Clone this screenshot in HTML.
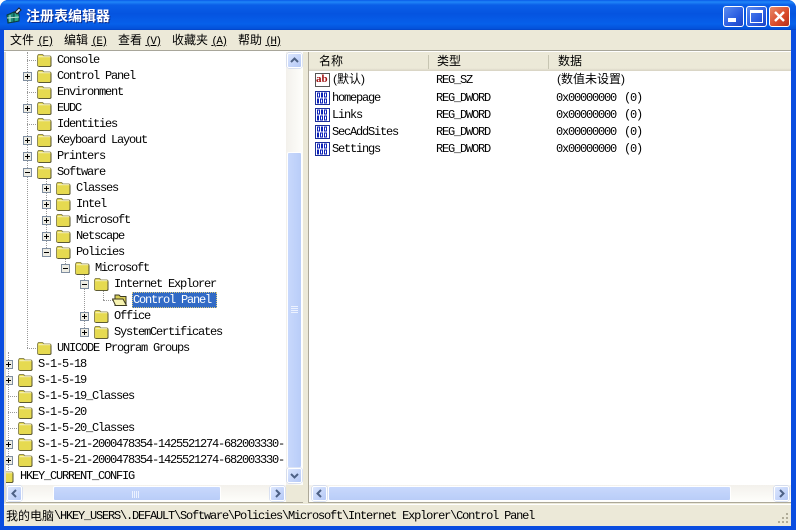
<!DOCTYPE html>
<html><head><meta charset="utf-8"><style>
*{box-sizing:border-box}
html,body{margin:0;padding:0;width:796px;height:530px;overflow:hidden;background:#fff}
#w{position:relative;width:796px;height:530px;overflow:hidden;background:#0a4de0;border-radius:8px 8px 0 0}
.a{position:absolute}
.t{position:absolute;font:12px/16px "Liberation Mono",monospace;letter-spacing:-1.2px;color:#000;white-space:pre}
.c{position:absolute;font:12px/14px "Liberation Sans","WenQuanYi Zen Hei","Noto Sans CJK SC",sans-serif;color:#000;white-space:pre}
.c u{font:11px "Liberation Mono",monospace;letter-spacing:-1.6px;text-decoration:underline}
svg.a{overflow:visible}
.h{border-top:1px dotted #999;height:0;position:absolute}
.v{border-left:1px dotted #999;width:0;position:absolute}
.btn{position:absolute;width:15px;height:15px;background:linear-gradient(135deg,#dbe6fe,#b4c8f6);border:1px solid #fff;border-radius:2px;box-shadow:0 0 0 .5px #b9c9ee}
</style></head><body>
<svg width="0" height="0" style="position:absolute"><defs>
<symbol id="f" viewBox="0 0 16 14"><path d="M1.5 3 L2.5 1.5 H6.5 L8 3 H14 L15 4 V12.5 L14 13.5 H2.5 L1.5 12.5 Z" fill="#e6da50" stroke="#8f8a58"/><path d="M2.5 3.7H14" stroke="#f8f4c0"/><path d="M15 4.5 V12.8 L14 13.6 H3" fill="none" stroke="#55532f"/></symbol>
<symbol id="o" viewBox="0 0 17 14"><path d="M3 12.5 V2 H7 L8.5 3.5 H14 V12.5 Z" fill="#d8ce58" stroke="#3c3a20"/><path d="M0.5 6 H11 L14.5 12.5 H3.5 Z" fill="#f7f3b0" stroke="#3c3a20"/></symbol>
<symbol id="p" viewBox="0 0 9 9"><rect x=".5" y=".5" width="8" height="8" fill="#eeede4" stroke="#7f8ea0"/><path d="M2 4.5H7M4.5 2V7" stroke="#000"/></symbol>
<symbol id="m" viewBox="0 0 9 9"><rect x=".5" y=".5" width="8" height="8" fill="#eeede4" stroke="#7f8ea0"/><path d="M2 4.5H7" stroke="#000"/></symbol>
<symbol id="b" viewBox="0 0 17 16"><path d="M1.5 1.5H15.5V14.5H1.5Z" fill="#fff" stroke="#1c2f9c"/><g fill="#0c22b8"><rect x="3" y="2.5" width="3" height="5"/><rect x="7" y="2.5" width="2" height="5"/><rect x="10" y="2.5" width="3" height="5"/><rect x="3" y="8.5" width="2" height="5"/><rect x="6" y="8.5" width="3" height="5"/><rect x="10" y="8.5" width="3" height="5"/></g><g fill="#fff"><rect x="4" y="3.5" width="1" height="3"/><rect x="11" y="3.5" width="1" height="3"/><rect x="7" y="9.5" width="1" height="3"/><rect x="11" y="9.5" width="1" height="3"/></g></symbol>
</defs></svg>
<div id="w">
<!-- title bar -->
<div class="a" style="left:0;top:0;width:796px;height:30px;background:linear-gradient(#0a5ae8 0,#1f86f8 2px,#0a5fe8 5px,#0554e0 14px,#0660ea 24px,#0450d8 29px,#0340c0 30px)"></div>
<svg class="a" style="left:5px;top:7px" width="18" height="18" viewBox="0 0 18 18"><path d="M2 8 L9 5 V15 L3 16 Z" fill="#1e8a7a" stroke="#0b3a3a"/><path d="M9 5 L14 7 V14 L9 15Z" fill="#2aa888" stroke="#0b3a3a"/><path d="M5 8V15M2 11L14 10" stroke="#bfe8d8"/><path d="M10 5 L14 1 L16 3 L12 7Z" fill="#e8f0f0" stroke="#222"/></svg>
<div class="c" style="left:26px;top:8px;font:bold 14px/16px 'WenQuanYi Zen Hei','Noto Sans CJK SC',sans-serif;color:#fff;text-shadow:1px 1px 0 #0a2a8a">注册表编辑器</div>
<!-- window buttons -->
<div class="a" style="left:723px;top:6px;width:21px;height:21px;border:1px solid #fff;border-radius:3px;background:linear-gradient(135deg,#5c8cf0,#2a5ce0 60%,#1c44c4)"></div>
<div class="a" style="left:728px;top:18px;width:8px;height:4px;background:#fff"></div>
<div class="a" style="left:746px;top:6px;width:21px;height:21px;border:1px solid #fff;border-radius:3px;background:linear-gradient(135deg,#5c8cf0,#2a5ce0 60%,#1c44c4)"></div>
<div class="a" style="left:750px;top:10px;width:13px;height:13px;border:1px solid #fff;border-top-width:3px"></div>
<div class="a" style="left:769px;top:6px;width:21px;height:21px;border:1px solid #fff;border-radius:3px;background:linear-gradient(135deg,#e88a68,#d8492a 60%,#b8301a)"></div>
<svg class="a" style="left:769px;top:6px" width="21" height="21"><path d="M6 6L15 15M15 6L6 15" stroke="#fff" stroke-width="2.4"/></svg>
<!-- client -->
<div class="a" style="left:4px;top:30px;width:787px;height:496px;background:#ece9d8"></div>
<div class="a" style="left:4px;top:50px;width:787px;height:1px;background:#a8a69a"></div>
<div class="a" style="left:4px;top:51px;width:787px;height:1px;background:#fff"></div>
<!-- menu -->
<div class="c" style="left:10px;top:33px">文件 <u>(F)</u></div>
<div class="c" style="left:64px;top:33px">编辑 <u>(E)</u></div>
<div class="c" style="left:118px;top:33px">查看 <u>(V)</u></div>
<div class="c" style="left:172px;top:33px">收藏夹 <u>(A)</u></div>
<div class="c" style="left:238px;top:33px">帮助 <u>(H)</u></div>
<!-- left pane -->
<div class="a" style="left:5px;top:52px;width:298px;height:451px;background:#fff;border-right:1px solid #aca899;border-bottom:1px solid #aca899"></div>
<!-- tree lines -->
<div class="v" style="left:27px;top:52px;height:296px"></div>
<div class="v" style="left:8px;top:352px;height:118px"></div>
<div class="v" style="left:46px;top:172px;height:80px"></div>
<div class="v" style="left:65px;top:252px;height:16px"></div>
<div class="v" style="left:84px;top:268px;height:64px"></div>
<div class="v" style="left:103px;top:284px;height:16px"></div>
<div class="h" style="left:27px;top:60px;width:9px"></div><div class="h" style="left:27px;top:92px;width:9px"></div><div class="h" style="left:27px;top:124px;width:9px"></div><div class="h" style="left:27px;top:348px;width:9px"></div>
<div class="h" style="left:103px;top:300px;width:10px"></div>
<div class="h" style="left:8px;top:396px;width:9px"></div><div class="h" style="left:8px;top:412px;width:9px"></div><div class="h" style="left:8px;top:428px;width:9px"></div>
<!-- expanders -->
<svg class="a" style="left:23px;top:72px" width="9" height="9"><use href="#p"/></svg>
<svg class="a" style="left:23px;top:104px" width="9" height="9"><use href="#p"/></svg>
<svg class="a" style="left:23px;top:136px" width="9" height="9"><use href="#p"/></svg>
<svg class="a" style="left:23px;top:152px" width="9" height="9"><use href="#p"/></svg>
<svg class="a" style="left:23px;top:168px" width="9" height="9"><use href="#m"/></svg>
<svg class="a" style="left:42px;top:184px" width="9" height="9"><use href="#p"/></svg>
<svg class="a" style="left:42px;top:200px" width="9" height="9"><use href="#p"/></svg>
<svg class="a" style="left:42px;top:216px" width="9" height="9"><use href="#p"/></svg>
<svg class="a" style="left:42px;top:232px" width="9" height="9"><use href="#p"/></svg>
<svg class="a" style="left:42px;top:248px" width="9" height="9"><use href="#m"/></svg>
<svg class="a" style="left:61px;top:264px" width="9" height="9"><use href="#m"/></svg>
<svg class="a" style="left:80px;top:280px" width="9" height="9"><use href="#m"/></svg>
<svg class="a" style="left:80px;top:312px" width="9" height="9"><use href="#p"/></svg>
<svg class="a" style="left:80px;top:328px" width="9" height="9"><use href="#p"/></svg>
<svg class="a" style="left:4px;top:360px" width="9" height="9"><use href="#p"/></svg>
<svg class="a" style="left:4px;top:376px" width="9" height="9"><use href="#p"/></svg>
<svg class="a" style="left:4px;top:440px" width="9" height="9"><use href="#p"/></svg>
<svg class="a" style="left:4px;top:456px" width="9" height="9"><use href="#p"/></svg>
<!-- folders -->
<svg class="a" style="left:36px;top:53px" width="16" height="14"><use href="#f"/></svg>
<svg class="a" style="left:36px;top:69px" width="16" height="14"><use href="#f"/></svg>
<svg class="a" style="left:36px;top:85px" width="16" height="14"><use href="#f"/></svg>
<svg class="a" style="left:36px;top:101px" width="16" height="14"><use href="#f"/></svg>
<svg class="a" style="left:36px;top:117px" width="16" height="14"><use href="#f"/></svg>
<svg class="a" style="left:36px;top:133px" width="16" height="14"><use href="#f"/></svg>
<svg class="a" style="left:36px;top:149px" width="16" height="14"><use href="#f"/></svg>
<svg class="a" style="left:36px;top:165px" width="16" height="14"><use href="#f"/></svg>
<svg class="a" style="left:55px;top:181px" width="16" height="14"><use href="#f"/></svg>
<svg class="a" style="left:55px;top:197px" width="16" height="14"><use href="#f"/></svg>
<svg class="a" style="left:55px;top:213px" width="16" height="14"><use href="#f"/></svg>
<svg class="a" style="left:55px;top:229px" width="16" height="14"><use href="#f"/></svg>
<svg class="a" style="left:55px;top:245px" width="16" height="14"><use href="#f"/></svg>
<svg class="a" style="left:74px;top:261px" width="16" height="14"><use href="#f"/></svg>
<svg class="a" style="left:93px;top:277px" width="16" height="14"><use href="#f"/></svg>
<svg class="a" style="left:112px;top:293px" width="17" height="14"><use href="#o"/></svg>
<svg class="a" style="left:93px;top:309px" width="16" height="14"><use href="#f"/></svg>
<svg class="a" style="left:93px;top:325px" width="16" height="14"><use href="#f"/></svg>
<svg class="a" style="left:36px;top:341px" width="16" height="14"><use href="#f"/></svg>
<svg class="a" style="left:17px;top:357px" width="16" height="14"><use href="#f"/></svg>
<svg class="a" style="left:17px;top:373px" width="16" height="14"><use href="#f"/></svg>
<svg class="a" style="left:17px;top:389px" width="16" height="14"><use href="#f"/></svg>
<svg class="a" style="left:17px;top:405px" width="16" height="14"><use href="#f"/></svg>
<svg class="a" style="left:17px;top:421px" width="16" height="14"><use href="#f"/></svg>
<svg class="a" style="left:17px;top:437px" width="16" height="14"><use href="#f"/></svg>
<svg class="a" style="left:17px;top:453px" width="16" height="14"><use href="#f"/></svg>
<svg class="a" style="left:-2px;top:469px" width="16" height="14"><use href="#f"/></svg>
<!-- tree text -->
<div class="t" style="left:57px;top:52px">Console</div>
<div class="t" style="left:57px;top:68px">Control Panel</div>
<div class="t" style="left:57px;top:84px">Environment</div>
<div class="t" style="left:57px;top:100px">EUDC</div>
<div class="t" style="left:57px;top:116px">Identities</div>
<div class="t" style="left:57px;top:132px">Keyboard Layout</div>
<div class="t" style="left:57px;top:148px">Printers</div>
<div class="t" style="left:57px;top:164px">Software</div>
<div class="t" style="left:76px;top:180px">Classes</div>
<div class="t" style="left:76px;top:196px">Intel</div>
<div class="t" style="left:76px;top:212px">Microsoft</div>
<div class="t" style="left:76px;top:228px">Netscape</div>
<div class="t" style="left:76px;top:244px">Policies</div>
<div class="t" style="left:95px;top:260px">Microsoft</div>
<div class="t" style="left:114px;top:276px">Internet Explorer</div>
<div class="a" style="left:132px;top:292px;width:85px;height:16px;background:#316ac5;border:1px dotted #d8c880"></div>
<div class="t" style="left:133px;top:292px;color:#fff">Control Panel</div>
<div class="t" style="left:114px;top:308px">Office</div>
<div class="t" style="left:114px;top:324px">SystemCertificates</div>
<div class="t" style="left:57px;top:340px">UNICODE Program Groups</div>
<div class="t" style="left:38px;top:356px">S-1-5-18</div>
<div class="t" style="left:38px;top:372px">S-1-5-19</div>
<div class="t" style="left:38px;top:388px">S-1-5-19_Classes</div>
<div class="t" style="left:38px;top:404px">S-1-5-20</div>
<div class="t" style="left:38px;top:420px">S-1-5-20_Classes</div>
<div class="t" style="left:38px;top:436px">S-1-5-21-2000478354-1425521274-682003330-</div>
<div class="t" style="left:38px;top:452px">S-1-5-21-2000478354-1425521274-682003330-</div>
<div class="t" style="left:20px;top:468px">HKEY_CURRENT_CONFIG</div>
<!-- left window border overlay clips the tree -->
<div class="a" style="left:0;top:30px;width:4px;height:500px;background:#0a4de0"></div>
<div class="a" style="left:4px;top:52px;width:2px;height:451px;background:#dcdad0"></div>
<!-- left v scroll -->
<div class="a" style="left:286px;top:52px;width:17px;height:433px;background:linear-gradient(90deg,#f3f1ec,#fefefb)"></div>
<div class="a" style="left:287px;top:152px;width:15px;height:316px;background:linear-gradient(90deg,#c8d8fc,#b9cdf8);border:1px solid #fff;border-radius:2px"></div>
<svg class="a" style="left:290px;top:306px" width="9" height="7"><path d="M1 .5H8M1 2.5H8M1 4.5H8M1 6.5H8" stroke="#ecf2ff"/></svg>
<div class="btn" style="left:287px;top:53px"></div>
<svg class="a" style="left:287px;top:53px" width="15" height="15"><path d="M4 9L7.5 5.5L11 9" fill="none" stroke="#4d6185" stroke-width="2"/></svg>
<div class="btn" style="left:287px;top:468px"></div>
<svg class="a" style="left:287px;top:468px" width="15" height="15"><path d="M4 6L7.5 9.5L11 6" fill="none" stroke="#4d6185" stroke-width="2"/></svg>
<!-- left h scroll -->
<div class="a" style="left:6px;top:485px;width:280px;height:17px;background:linear-gradient(#f3f1ec,#fefefb)"></div>
<div class="a" style="left:53px;top:486px;width:168px;height:15px;background:linear-gradient(#c8d8fc,#b9cdf8);border:1px solid #fff;border-radius:2px"></div>
<svg class="a" style="left:132px;top:490px" width="7" height="8"><path d="M.5 1V8M2.5 1V8M4.5 1V8M6.5 1V8" stroke="#ecf2ff"/></svg>
<div class="btn" style="left:7px;top:486px"></div>
<svg class="a" style="left:7px;top:486px" width="15" height="15"><path d="M9 4L5.5 7.5L9 11" fill="none" stroke="#4d6185" stroke-width="2"/></svg>
<div class="btn" style="left:270px;top:486px"></div>
<svg class="a" style="left:270px;top:486px" width="15" height="15"><path d="M6 4L9.5 7.5L6 11" fill="none" stroke="#4d6185" stroke-width="2"/></svg>
<div class="a" style="left:286px;top:485px;width:17px;height:17px;background:#ece9d8"></div>
<!-- right pane -->
<div class="a" style="left:308px;top:52px;width:483px;height:451px;background:#fff;border-left:1px solid #aca899;border-bottom:1px solid #aca899"></div>
<div class="a" style="left:309px;top:52px;width:482px;height:19px;background:linear-gradient(#ece9d8 0,#ece9d8 85%,#d6d2c2 100%)"></div>
<div class="a" style="left:428px;top:55px;width:1px;height:14px;background:#c7c5b2"></div>
<div class="a" style="left:548px;top:55px;width:1px;height:14px;background:#c7c5b2"></div>
<div class="c" style="left:319px;top:54px">名称</div>
<div class="c" style="left:437px;top:54px">类型</div>
<div class="c" style="left:558px;top:54px">数据</div>
<!-- list rows -->
<svg class="a" style="left:314px;top:72px" width="17" height="16"><path d="M1.5 1.5H15.5V14.5H1.5Z" fill="#fff" stroke="#555"/></svg>
<div class="a" style="left:316px;top:72px;font:bold 11px/14px 'Liberation Serif',serif;color:#a01010">ab</div>
<svg class="a" style="left:314px;top:90px" width="17" height="16"><use href="#b"/></svg>
<svg class="a" style="left:314px;top:107px" width="17" height="16"><use href="#b"/></svg>
<svg class="a" style="left:314px;top:124px" width="17" height="16"><use href="#b"/></svg>
<svg class="a" style="left:314px;top:141px" width="17" height="16"><use href="#b"/></svg>
<div class="c" style="left:333px;top:72px">(默认)</div>
<div class="t" style="left:332px;top:90px">homepage</div>
<div class="t" style="left:332px;top:107px">Links</div>
<div class="t" style="left:332px;top:124px">SecAddSites</div>
<div class="t" style="left:332px;top:141px">Settings</div>
<div class="t" style="left:436px;top:72px">REG_SZ</div>
<div class="t" style="left:436px;top:90px">REG_DWORD</div>
<div class="t" style="left:436px;top:107px">REG_DWORD</div>
<div class="t" style="left:436px;top:124px">REG_DWORD</div>
<div class="t" style="left:436px;top:141px">REG_DWORD</div>
<div class="c" style="left:557px;top:72px">(数值未设置)</div>
<div class="t" style="left:556px;top:90px">0x00000000</div><div class="t" style="left:624px;top:90px">(0)</div>
<div class="t" style="left:556px;top:107px">0x00000000</div><div class="t" style="left:624px;top:107px">(0)</div>
<div class="t" style="left:556px;top:124px">0x00000000</div><div class="t" style="left:624px;top:124px">(0)</div>
<div class="t" style="left:556px;top:141px">0x00000000</div><div class="t" style="left:624px;top:141px">(0)</div>
<!-- right h scroll -->
<div class="a" style="left:309px;top:485px;width:482px;height:17px;background:linear-gradient(#f3f1ec,#fefefb)"></div>
<div class="a" style="left:328px;top:486px;width:403px;height:15px;background:linear-gradient(#c8d8fc,#b9cdf8);border:1px solid #fff;border-radius:2px"></div>
<div class="btn" style="left:312px;top:486px"></div>
<svg class="a" style="left:312px;top:486px" width="15" height="15"><path d="M9 4L5.5 7.5L9 11" fill="none" stroke="#4d6185" stroke-width="2"/></svg>
<div class="btn" style="left:774px;top:486px"></div>
<svg class="a" style="left:774px;top:486px" width="15" height="15"><path d="M6 4L9.5 7.5L6 11" fill="none" stroke="#4d6185" stroke-width="2"/></svg>
<!-- status -->
<div class="a" style="left:4px;top:504px;width:787px;height:22px;background:#ece9d8;border-top:1px solid #fff"></div>
<div class="c" style="left:6px;top:509px">我的电脑</div>
<div class="t" style="left:54px;top:508px">\HKEY_USERS\.DEFAULT\Software\Policies\Microsoft\Internet Explorer\Control Panel</div>
<svg class="a" style="left:778px;top:513px" width="12" height="12"><g fill="#b0ac98"><rect x="8" y="0" width="2" height="2"/><rect x="4" y="4" width="2" height="2"/><rect x="8" y="4" width="2" height="2"/><rect x="0" y="8" width="2" height="2"/><rect x="4" y="8" width="2" height="2"/><rect x="8" y="8" width="2" height="2"/></g></svg>
</div>
</body></html>
